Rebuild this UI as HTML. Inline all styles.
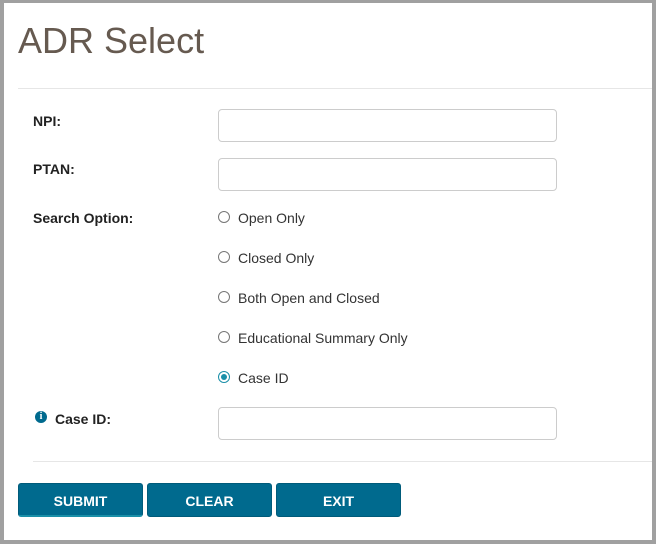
<!DOCTYPE html>
<html><head><style>
body{margin:0;width:656px;height:544px;background:#a0a0a0;font-family:"Liberation Sans",Arial,sans-serif;overflow:hidden}
#p{position:absolute;left:4px;top:3px;width:648px;height:537px;background:#fff}
.a{position:absolute}
h1{position:absolute;left:14px;top:17px;margin:0;font-weight:normal;font-size:36px;color:#665a50}
.hr{position:absolute;height:1px;background:#e6e6e6}
.lb{position:absolute;left:29px;font-size:14px;font-weight:bold;color:#222}
.in{position:absolute;left:214px;width:337px;height:31px;border:1px solid #ccc;border-radius:4px}
.r{position:absolute;left:214px;width:12px;height:12px;border:1px solid #767676;border-radius:50%;box-sizing:border-box}
.rt{position:absolute;left:234px;font-size:14px;color:#333}
.b{position:absolute;top:480px;height:34px;background:#006a8e;border:1px solid #005b7a;border-radius:3px;color:#fff;font-weight:bold;font-size:14px;text-align:center;line-height:34px;box-sizing:border-box}
</style></head><body><div id="p">
<h1>ADR Select</h1>
<div class="hr" style="left:14px;top:85px;width:634px"></div>
<div class="lb" style="top:110px">NPI:</div>
<div class="in" style="top:106px"></div>
<div class="lb" style="top:158px">PTAN:</div>
<div class="in" style="top:155px"></div>
<div class="lb" style="top:207px">Search Option:</div>
<div class="r" style="top:208px"></div><div class="rt" style="top:207px">Open Only</div>
<div class="r" style="top:248px"></div><div class="rt" style="top:247px">Closed Only</div>
<div class="r" style="top:288px"></div><div class="rt" style="top:287px">Both Open and Closed</div>
<div class="r" style="top:328px"></div><div class="rt" style="top:327px">Educational Summary Only</div>
<div class="r" style="top:368px;border-color:#1a8fa8"><div style="position:absolute;left:2px;top:2px;width:6px;height:6px;border-radius:50%;background:#1a8fa8"></div></div><div class="rt" style="top:367px">Case ID</div>
<div class="a" style="left:31px;top:408px;width:12px;height:12px;border-radius:50%;background:#006a8e;color:#fff;font-size:10px;font-weight:bold;text-align:center;line-height:12px;font-family:'Liberation Serif',serif">i</div>
<div class="lb" style="left:51px;top:408px">Case ID:</div>
<div class="in" style="top:404px"></div>
<div class="hr" style="left:29px;top:458px;width:619px"></div>
<div class="b" style="left:14px;width:125px;border-bottom:2px solid #1a8fa8">SUBMIT</div>
<div class="b" style="left:143px;width:125px">CLEAR</div>
<div class="b" style="left:272px;width:125px">EXIT</div>
</div></body></html>
